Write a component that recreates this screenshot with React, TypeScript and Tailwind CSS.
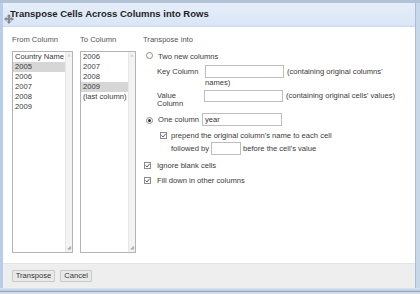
import React from "react";

const font = { fontFamily: '"Liberation Sans", Arial, sans-serif' };

const Radio = ({ checked }: { checked?: boolean }) => (
  <span className="inline-flex w-[7px] h-[7px] rounded-full border border-[#8c8c8c] bg-white items-center justify-center shrink-0">
    {checked && <span className="w-[3px] h-[3px] rounded-full bg-[#333]" />}
  </span>
);

const Check = () => (
  <span className="inline-flex w-[7px] h-[7px] border border-[#8c8c8c] bg-white items-center justify-center shrink-0">
    <svg width="5" height="5" viewBox="0 0 5 5">
      <path d="M0.5 2.4 L2 4 L4.6 0.8" fill="none" stroke="#444" strokeWidth="0.9" />
    </svg>
  </span>
);

const ListBox = ({ items, selected }: { items: string[]; selected: string }) => (
  <div className="relative h-[202px] border border-[#b4b4b4] bg-white">
    <div className="pr-[7px]">
      {items.map((it) => (
        <div
          key={it}
          className={
            "h-[10px] leading-[10px] pl-[2px] whitespace-nowrap overflow-hidden " +
            (it === selected ? "bg-[#d6d6d6]" : "")
          }
        >
          {it}
        </div>
      ))}
    </div>
    {/* scrollbar strip */}
    <div className="absolute right-0 top-0 bottom-0 w-[7px] bg-[#f3f3f3] border-l border-[#e6e6e6] flex flex-col justify-between items-center py-[2px]">
      <span className="text-[5px] leading-[5px] text-[#aaa]">˄</span>
      <span className="text-[5px] leading-[5px] text-[#aaa]">◢</span>
    </div>
  </div>
);

export default function App() {
  return (
    <div
      className="relative w-[420px] h-[294px] overflow-hidden bg-[#c4d5ea] text-[#3a3a3a] text-[7.6px]"
      style={font}
    >
      <div className="h-[3px] bg-[#b3c3d7]" />
      <div className="flex">
        <div className="w-[3px] bg-[#b9cde8]" />
        <div className="w-[412px] h-[285px] flex flex-col">
          {/* header */}
          <div className="h-[24px] shrink-0 bg-gradient-to-b from-[#e6eefa] to-[#d9e6f6] border-b border-[#cbd9ea] flex items-center pl-[7px]">
            <span className="font-bold text-[9.5px] text-[#1f1f1f]">
              Transpose Cells Across Columns into Rows
            </span>
          </div>

          {/* body */}
          <div className="flex-1 bg-white flex pl-[9px] pt-[8px]">
            <div className="w-[61px]">
              <div className="h-[10px] leading-[10px] text-[#555]">From Column</div>
              <div className="mt-[6px]">
                <ListBox
                  items={["Country Name", "2005", "2006", "2007", "2008", "2009"]}
                  selected="2005"
                />
              </div>
            </div>
            <div className="w-[56px] ml-[7px]">
              <div className="h-[10px] leading-[10px] text-[#555]">To Column</div>
              <div className="mt-[6px]">
                <ListBox items={["2006", "2007", "2008", "2009", "(last column)"]} selected="2009" />
              </div>
            </div>

            <div className="ml-[7px] w-[252px]">
              <div className="h-[10px] leading-[10px] text-[#555]">Transpose into</div>

              {/* two new columns */}
              <div className="mt-[6.7px] h-[10px] flex items-center">
                <span className="ml-[2.5px]"><Radio /></span>
                <span className="ml-[5.5px] leading-[10px]">Two new columns</span>
              </div>

              <div className="mt-[3.3px] flex">
                <div className="w-[48px] ml-[14px] h-[13px] leading-[13px]">Key Column</div>
                <div>
                  <div className="flex items-center h-[13px]">
                    <span className="w-[79px] h-[13px] border border-[#bdbdbd] bg-white" />
                    <span className="ml-[3px] whitespace-nowrap">(containing original columns'</span>
                  </div>
                  <div className="h-[9px] leading-[9px] mt-[0.5px]">names)</div>
                </div>
              </div>

              <div className="mt-[2.5px] flex">
                <div className="w-[48px] ml-[14px] leading-[8.5px] pt-[1.8px]">
                  Value
                  <br />
                  Column
                </div>
                <div className="flex items-start">
                  <span className="w-[79px] h-[12px] border border-[#bdbdbd] bg-white" />
                  <span className="ml-[3px] h-[12px] leading-[12px] whitespace-nowrap">
                    (containing original cells' values)
                  </span>
                </div>
              </div>

              {/* one column */}
              <div className="mt-[4.5px] h-[13px] flex items-center">
                <span className="ml-[2.5px]"><Radio checked /></span>
                <span className="ml-[5.5px]">One column</span>
                <span className="ml-[3px] w-[80px] h-[13px] border border-[#bdbdbd] bg-white pl-[2px] leading-[11px] text-[#333]">
                  year
                </span>
              </div>

              <div className="mt-[4.5px] h-[9.5px] flex items-center">
                <span className="ml-[16.5px]"><Check /></span>
                <span className="ml-[4.5px]">prepend the original column's name to each cell</span>
              </div>
              <div className="mt-[2px] h-[12.5px] flex items-center pl-[28px]">
                <span>followed by</span>
                <span className="ml-[2px] w-[30px] h-[12.5px] border border-[#bdbdbd] bg-white" />
                <span className="ml-[2px]">before the cell's value</span>
              </div>

              <div className="mt-[6px] h-[10px] flex items-center">
                <span className="ml-[1px]"><Check /></span>
                <span className="ml-[6px]">Ignore blank cells</span>
              </div>
              <div className="mt-[4.7px] h-[10px] flex items-center">
                <span className="ml-[1px]"><Check /></span>
                <span className="ml-[6px]">Fill down in other columns</span>
              </div>
            </div>
          </div>

          {/* footer */}
          <div className="h-[25px] shrink-0 bg-[#eeeeee] border-t border-[#e4e4e4] flex items-center pl-[8.7px] gap-[5px]">
            <button className="h-[12px] px-[3px] border border-[#c9c9c9] bg-[#e9e9e9] rounded-[1px] leading-[10px] text-[#333]">
              Transpose
            </button>
            <button className="h-[12px] px-[3px] border border-[#c9c9c9] bg-[#e9e9e9] rounded-[1px] leading-[10px] text-[#333]">
              Cancel
            </button>
          </div>
        </div>
        <div className="w-[5px] bg-[#c8d8ec] border-l border-[#a9bdd6]" />
      </div>
      <div className="h-[3px] bg-[#c3d3e8] border-t border-[#d8e4f2]" />
      <div className="h-[1px] bg-[#8fa4bd]" />
      <div className="h-[2px] bg-[#d4dde8]" />

      {/* mouse move cursor */}
      <svg className="absolute left-[4px] top-[14px]" width="10" height="10" viewBox="0 0 10 10">
        <path
          d="M5 0.5 L6.6 2.3 H5.6 V4.4 H7.7 V3.4 L9.5 5 L7.7 6.6 V5.6 H5.6 V7.7 H6.6 L5 9.5 L3.4 7.7 H4.4 V5.6 H2.3 V6.6 L0.5 5 L2.3 3.4 V4.4 H4.4 V2.3 H3.4 Z"
          fill="#8a8a8a"
          stroke="#555"
          strokeWidth="0.4"
        />
      </svg>
    </div>
  );
}
